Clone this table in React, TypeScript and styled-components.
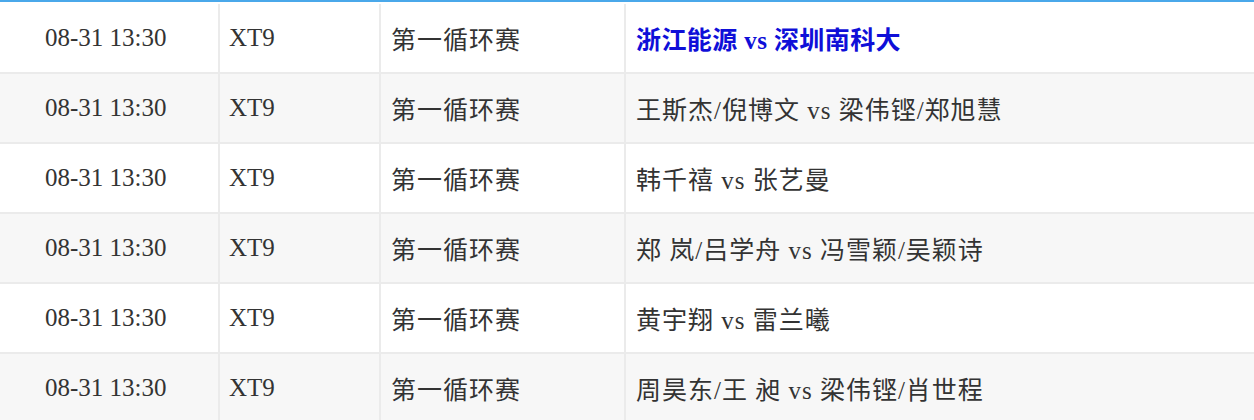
import React from 'react';
import styled, { createGlobalStyle } from 'styled-components';

const GlobalStyle = createGlobalStyle`
  body {
    margin: 0;
    background: #ffffff;
  }
`;

const Table = styled.div`
  width: 1254px;
  border-top: 2px solid #4aa8ea;
  font-family: 'Liberation Serif', 'Noto Sans CJK SC', serif;
  font-size: 25px;
  color: #333333;
`;

const Row = styled.div<{ $striped: boolean }>`
  display: grid;
  grid-template-columns: 220px 161px 245px 1fr;
  height: 70px;
  box-sizing: border-box;
  border-bottom: 2px solid #ebebeb;
  background: ${({ $striped }) => ($striped ? '#f7f7f7' : '#ffffff')};

  &:first-child {
    height: 72px;
    padding-top: 2px;
  }
`;

const Cell = styled.div<{ $pad?: number; $last?: boolean; $cjk?: boolean }>`
  display: flex;
  align-items: center;
  box-sizing: border-box;
  padding-left: ${({ $pad }) => $pad ?? 10}px;
  border-right: ${({ $last }) => ($last ? 'none' : '2px solid #ebebeb')};
  letter-spacing: ${({ $cjk }) => ($cjk ? '1px' : 'normal')};
  white-space: nowrap;
`;

const MatchLink = styled.span`
  color: #0f0fd8;
  font-weight: bold;
  letter-spacing: 0.4px;
`;

interface Match {
  time: string;
  code: string;
  stage: string;
  title: string;
  highlight?: boolean;
}

const matches: Match[] = [
  { time: '08-31 13:30', code: 'XT9', stage: '第一循环赛', title: '浙江能源 vs 深圳南科大', highlight: true },
  { time: '08-31 13:30', code: 'XT9', stage: '第一循环赛', title: '王斯杰/倪博文 vs 梁伟铿/郑旭慧' },
  { time: '08-31 13:30', code: 'XT9', stage: '第一循环赛', title: '韩千禧 vs 张艺曼' },
  { time: '08-31 13:30', code: 'XT9', stage: '第一循环赛', title: '郑 岚/吕学舟 vs 冯雪颖/吴颖诗' },
  { time: '08-31 13:30', code: 'XT9', stage: '第一循环赛', title: '黄宇翔 vs 雷兰曦' },
  { time: '08-31 13:30', code: 'XT9', stage: '第一循环赛', title: '周昊东/王 昶 vs 梁伟铿/肖世程' },
];

const App: React.FC = () => (
  <>
    <GlobalStyle />
    <Table>
      {matches.map((m, i) => (
        <Row key={i} $striped={i % 2 === 1}>
          <Cell $pad={45}>{m.time}</Cell>
          <Cell $pad={9}>{m.code}</Cell>
          <Cell $cjk>{m.stage}</Cell>
          <Cell $cjk $last>
            {m.highlight ? <MatchLink>{m.title}</MatchLink> : m.title}
          </Cell>
        </Row>
      ))}
    </Table>
  </>
);

export default App;
